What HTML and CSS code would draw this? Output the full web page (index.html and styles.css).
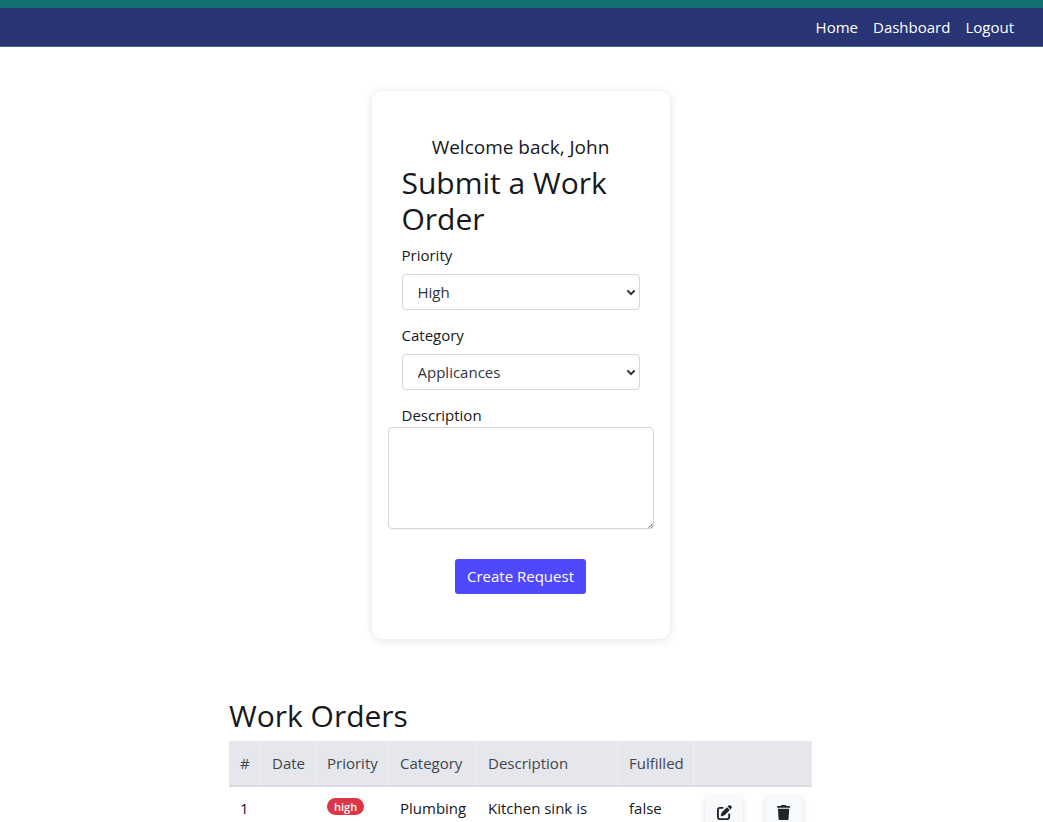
FILE: index.html
```html
<!DOCTYPE html>
<html lang="en">
<head>
<meta charset="utf-8">
<meta name="viewport" content="width=device-width, initial-scale=1">
<title>Work Orders</title>
<link rel="stylesheet" href="styles.css">
</head>
<body>
<header class="navbar">
  <nav class="nav">
    <a href="#">Home</a>
    <a href="#">Dashboard</a>
    <a href="#">Logout</a>
  </nav>
</header>
<main class="page">
  <form class="card">
    <p class="welcome">Welcome back, John</p>
    <h2 class="title">Submit a Work Order</h2>
    <label class="label" for="priority">Priority</label>
    <div class="select-wrap">
      <select class="select" id="priority"><option>High</option><option>Medium</option><option>Low</option></select>
      <svg class="chevron" viewBox="0 0 10 7" aria-hidden="true"><path d="M1.3 1.4 5 5 8.7 1.4"/></svg>
    </div>
    <label class="label" for="category">Category</label>
    <div class="select-wrap">
      <select class="select" id="category"><option>Applicances</option><option>Plumbing</option></select>
      <svg class="chevron" viewBox="0 0 10 7" aria-hidden="true"><path d="M1.3 1.4 5 5 8.7 1.4"/></svg>
    </div>
    <label class="label label-tight" for="description">Description</label>
    <div class="textarea-wrap">
      <textarea class="textarea" id="description"></textarea>
      <svg class="grip" viewBox="0 0 6 6" aria-hidden="true"><path d="M1 5.500 5.500 1M4 5.500 5.500 4"/></svg>
    </div>
    <button class="submit" type="submit">Create Request</button>
  </form>
  <section class="orders">
    <h2 class="title">Work Orders</h2>
    <table class="table">
      <colgroup><col class="c-num"><col class="c-date"><col class="c-priority"><col class="c-category"><col class="c-desc"><col class="c-done"><col class="c-edit"><col class="c-delete"></colgroup>
      <thead>
        <tr><th>#</th><th>Date</th><th>Priority</th><th>Category</th><th>Description</th><th>Fulfilled</th><th colspan="2"></th></tr>
      </thead>
      <tbody>
        <tr>
          <td>1</td><td></td><td><span class="badge">high</span></td><td>Plumbing</td><td>Kitchen sink is</td><td>false</td>
          <td><button class="icon-btn" type="button" aria-label="Edit"><svg viewBox="0 0 512 512" aria-hidden="true"><path d="M471.600 21.700c-21.900-21.900-57.300-21.900-79.200 0L362.300 51.700l97.900 97.900 30.100-30.100c21.900-21.900 21.900-57.300 0-79.200L471.600 21.700zm-299.200 220c-6.100 6.100-10.800 13.600-13.500 21.900l-29.600 88.800c-2.900 8.600-.6 18.100 5.800 24.600s15.900 8.700 24.600 5.800l88.800-29.600c8.200-2.700 15.700-7.400 21.900-13.500L437.700 172.300 339.700 74.300 172.400 241.700zM96 64C43 64 0 107 0 160V416c0 53 43 96 96 96H352c53 0 96-43 96-96V320c0-17.700-14.300-32-32-32s-32 14.300-32 32v96c0 17.700-14.300 32-32 32H96c-17.700 0-32-14.300-32-32V160c0-17.700 14.300-32 32-32h96c17.700 0 32-14.300 32-32s-14.300-32-32-32H96z"/></svg></button></td>
          <td><button class="icon-btn" type="button" aria-label="Delete"><svg viewBox="0 0 448 512" aria-hidden="true"><path d="M135.200 17.700 128 32H32C14.300 32 0 46.300 0 64s14.300 32 32 32h384c17.700 0 32-14.300 32-32s-14.300-32-32-32h-96l-7.200-14.300C307.400 6.800 296.300 0 284.200 0H163.800c-12.100 0-23.200 6.800-28.600 17.700zM416 128H32l21.200 339c1.600 25.300 22.600 45 47.900 45h245.800c25.300 0 46.300-19.700 47.900-45L416 128z"/></svg></button></td>
        </tr>
      </tbody>
    </table>
  </section>
</main>
</body>
</html>
```
FILE: styles.css
```css
* { box-sizing: border-box; }
body {
  margin: 0;
  height: 100vh;
  overflow: hidden;
  background: #fff;
  color: #16181c;
  font: 15px/22px "Open Sans", "Noto Sans", sans-serif;
}
.navbar {
  border-top: 8px solid #127075;
  border-bottom: 1px solid #45698c;
  background: #283474;
  padding: 8px 29px;
}
.nav { display: flex; justify-content: flex-end; gap: 15px; }
.nav a { color: #fff; font-weight: 500; text-decoration: none; }
.page { display: flex; flex-direction: column; align-items: center; padding: 44px 16px 0; }
.card {
  display: flex;
  flex-direction: column;
  width: 100%;
  max-width: 298px;
  margin-right: 2px;
  padding: 45px 30px;
  border-radius: 10px;
  box-shadow: 0 1px 10px rgba(0, 0, 0, .12);
}
.welcome { margin: 0 0 6px; font-size: 19px; line-height: 23px; text-align: center; }
.title { margin: 0 0 7px; font-size: 30px; line-height: 36px; font-weight: 400; }
.label { margin-bottom: 8px; }
.label-tight { margin-bottom: 1px; }
.select-wrap { position: relative; margin-bottom: 14px; }
.select {
  display: block;
  appearance: none;
  width: 100%;
  height: 36px;
  padding: 0 15px;
  border: 1px solid #d1d5e0;
  border-radius: 4px;
  background: #fff;
  color: #31353f;
  font: inherit;
}
.chevron {
  position: absolute;
  right: 4px;
  top: 15px;
  width: 10px;
  height: 7px;
  fill: none;
  stroke: #30343c;
  stroke-width: 2;
  pointer-events: none;
}
.textarea-wrap { position: relative; margin: 0 -14px 30px; }
.textarea {
  display: block;
  width: 100%;
  height: 102px;
  border: 1px solid #d1d5e0;
  border-radius: 4px;
  font: inherit;
  resize: none;
}
.grip {
  position: absolute;
  right: 1px;
  bottom: 1px;
  width: 5px;
  height: 5px;
  fill: none;
  stroke: #222;
  pointer-events: none;
}
.submit {
  align-self: center;
  padding: 6px 12px 7px;
  border: 0;
  border-radius: 3px;
  background: #5048ff;
  color: #fff;
  font: inherit;
  font-weight: 500;
}
.orders { width: 100%; max-width: 583px; margin: 59px 2px 0 0; }
.table { width: 100%; table-layout: fixed; border-collapse: separate; border-spacing: 0; }
.c-num { width: 32px; }
.c-date { width: 55px; }
.c-priority { width: 73px; }
.c-category { width: 88px; }
.c-desc { width: 141px; }
.c-done { width: 76px; }
.c-edit { width: 60px; }
.table th {
  padding: 11px 0 11px 11px;
  border-right: 1px solid #eceef2;
  border-bottom: 2px solid #d9dbe1;
  background: #e5e7ec;
  color: #41464d;
  font-weight: 400;
  text-align: left;
}
.table td { padding: 10px 0 10px 11px; vertical-align: top; }
.badge {
  display: block;
  width: fit-content;
  margin-top: 1px;
  padding: 0 7px;
  border-radius: 9px;
  background: #dc3545;
  color: #fff;
  font-size: 11px;
  line-height: 17px;
  font-weight: 600;
}
.icon-btn {
  display: flex;
  align-items: center;
  justify-content: center;
  width: 38px;
  height: 30px;
  padding: 0;
  border: 0;
  border-radius: 4px;
  background: #f8f9fa;
  box-shadow: 0 1px 6px rgba(0, 0, 0, .12);
}
.icon-btn svg { height: 15px; fill: #212529; }
```
